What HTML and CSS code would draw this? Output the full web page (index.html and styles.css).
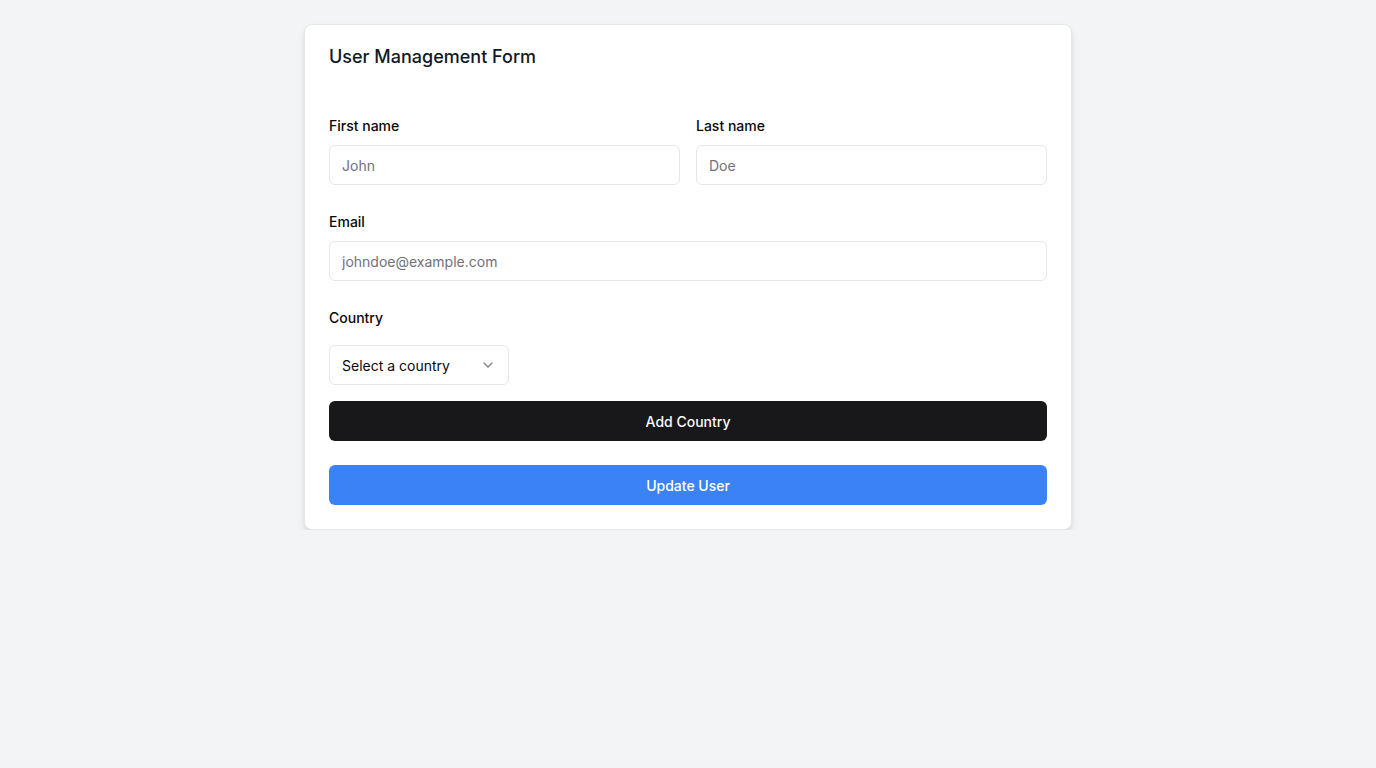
FILE: index.html
```html
<!DOCTYPE html>
<html lang="en">
<head>
<meta charset="utf-8">
<title>User Management Form</title>
<link rel="stylesheet" href="styles.css">
</head>
<body>
<main class="page">
  <form class="card">
    <h1 class="title">User Management Form</h1>
    <div class="grid">
      <div class="field">
        <label class="label" for="fn">First name</label>
        <input class="input" id="fn" placeholder="John">
      </div>
      <div class="field">
        <label class="label" for="ln">Last name</label>
        <input class="input" id="ln" placeholder="Doe">
      </div>
    </div>
    <div class="field field-gap">
      <label class="label" for="em">Email</label>
      <input class="input" id="em" placeholder="johndoe@example.com">
    </div>
    <div class="field field-gap">
      <label class="label label-country">Country</label>
      <button type="button" class="select">
        <span>Select a country</span>
        <svg class="chev" viewBox="0 0 24 24" width="16" height="16" fill="none" stroke="currentColor" stroke-width="2" stroke-linecap="round" stroke-linejoin="round"><path d="m6 9 6 6 6-6"/></svg>
      </button>
    </div>
    <button type="button" class="btn btn-dark">Add Country</button>
    <button type="button" class="btn btn-blue">Update User</button>
  </form>
</main>
</body>
</html>
```
FILE: styles.css
```css
* { box-sizing: border-box; }
html, body { margin: 0; padding: 0; }
body {
  background: #f3f4f6;
  font-family: Inter, "Noto Sans", "Liberation Sans", sans-serif;
  color: #09090b;
}
.page {
  padding-top: 24px;
  display: flex;
  justify-content: center;
}
.card {
  width: 768px;
  background: #fff;
  border: 1px solid #e5e7eb;
  border-radius: 8px;
  box-shadow: 0 4px 8px -1px rgba(0,0,0,0.1), 0 2px 5px -2px rgba(0,0,0,0.1);
  padding: 24px;
  display: flex;
  flex-direction: column;
}
.title {
  margin: 0;
  font-size: 18px;
  line-height: 18px;
  font-weight: 500;
  color: #111827;
  margin-top: -1px;
}
.grid {
  display: grid;
  grid-template-columns: 1fr 1fr;
  gap: 16px;
  margin-top: 50px;
}
.field {
  display: flex;
  flex-direction: column;
}
.field-gap { margin-top: 27px; }
.label {
  font-size: 14px;
  line-height: 20px;
  font-weight: 500;
  margin-bottom: 9px;
  color: #09090b;
}
.label-country { margin-bottom: 17px; }
.input {
  height: 40px;
  border: 1px solid #e5e7eb;
  border-radius: 6px;
  padding: 0 12px;
  font-family: inherit;
  font-size: 14px;
  color: #09090b;
  background: #fff;
  outline: none;
}
.input::placeholder { color: #71717a; }
.select {
  width: 180px;
  height: 40px;
  border: 1px solid #e5e7eb;
  border-radius: 6px;
  padding: 0 12px;
  background: #fff;
  font-family: inherit;
  font-size: 14px;
  color: #09090b;
  display: flex;
  align-items: center;
  justify-content: space-between;
}
.chev { color: #09090b; opacity: 0.5; }
.btn {
  height: 40px;
  border: 0;
  border-radius: 6px;
  font-family: inherit;
  font-size: 14px;
  font-weight: 500;
  color: #fafafa;
}
.btn-dark { background: #18181b; margin-top: 16px; }
.btn-blue { background: #3b82f6; margin-top: 24px; color: #fff; }
```
